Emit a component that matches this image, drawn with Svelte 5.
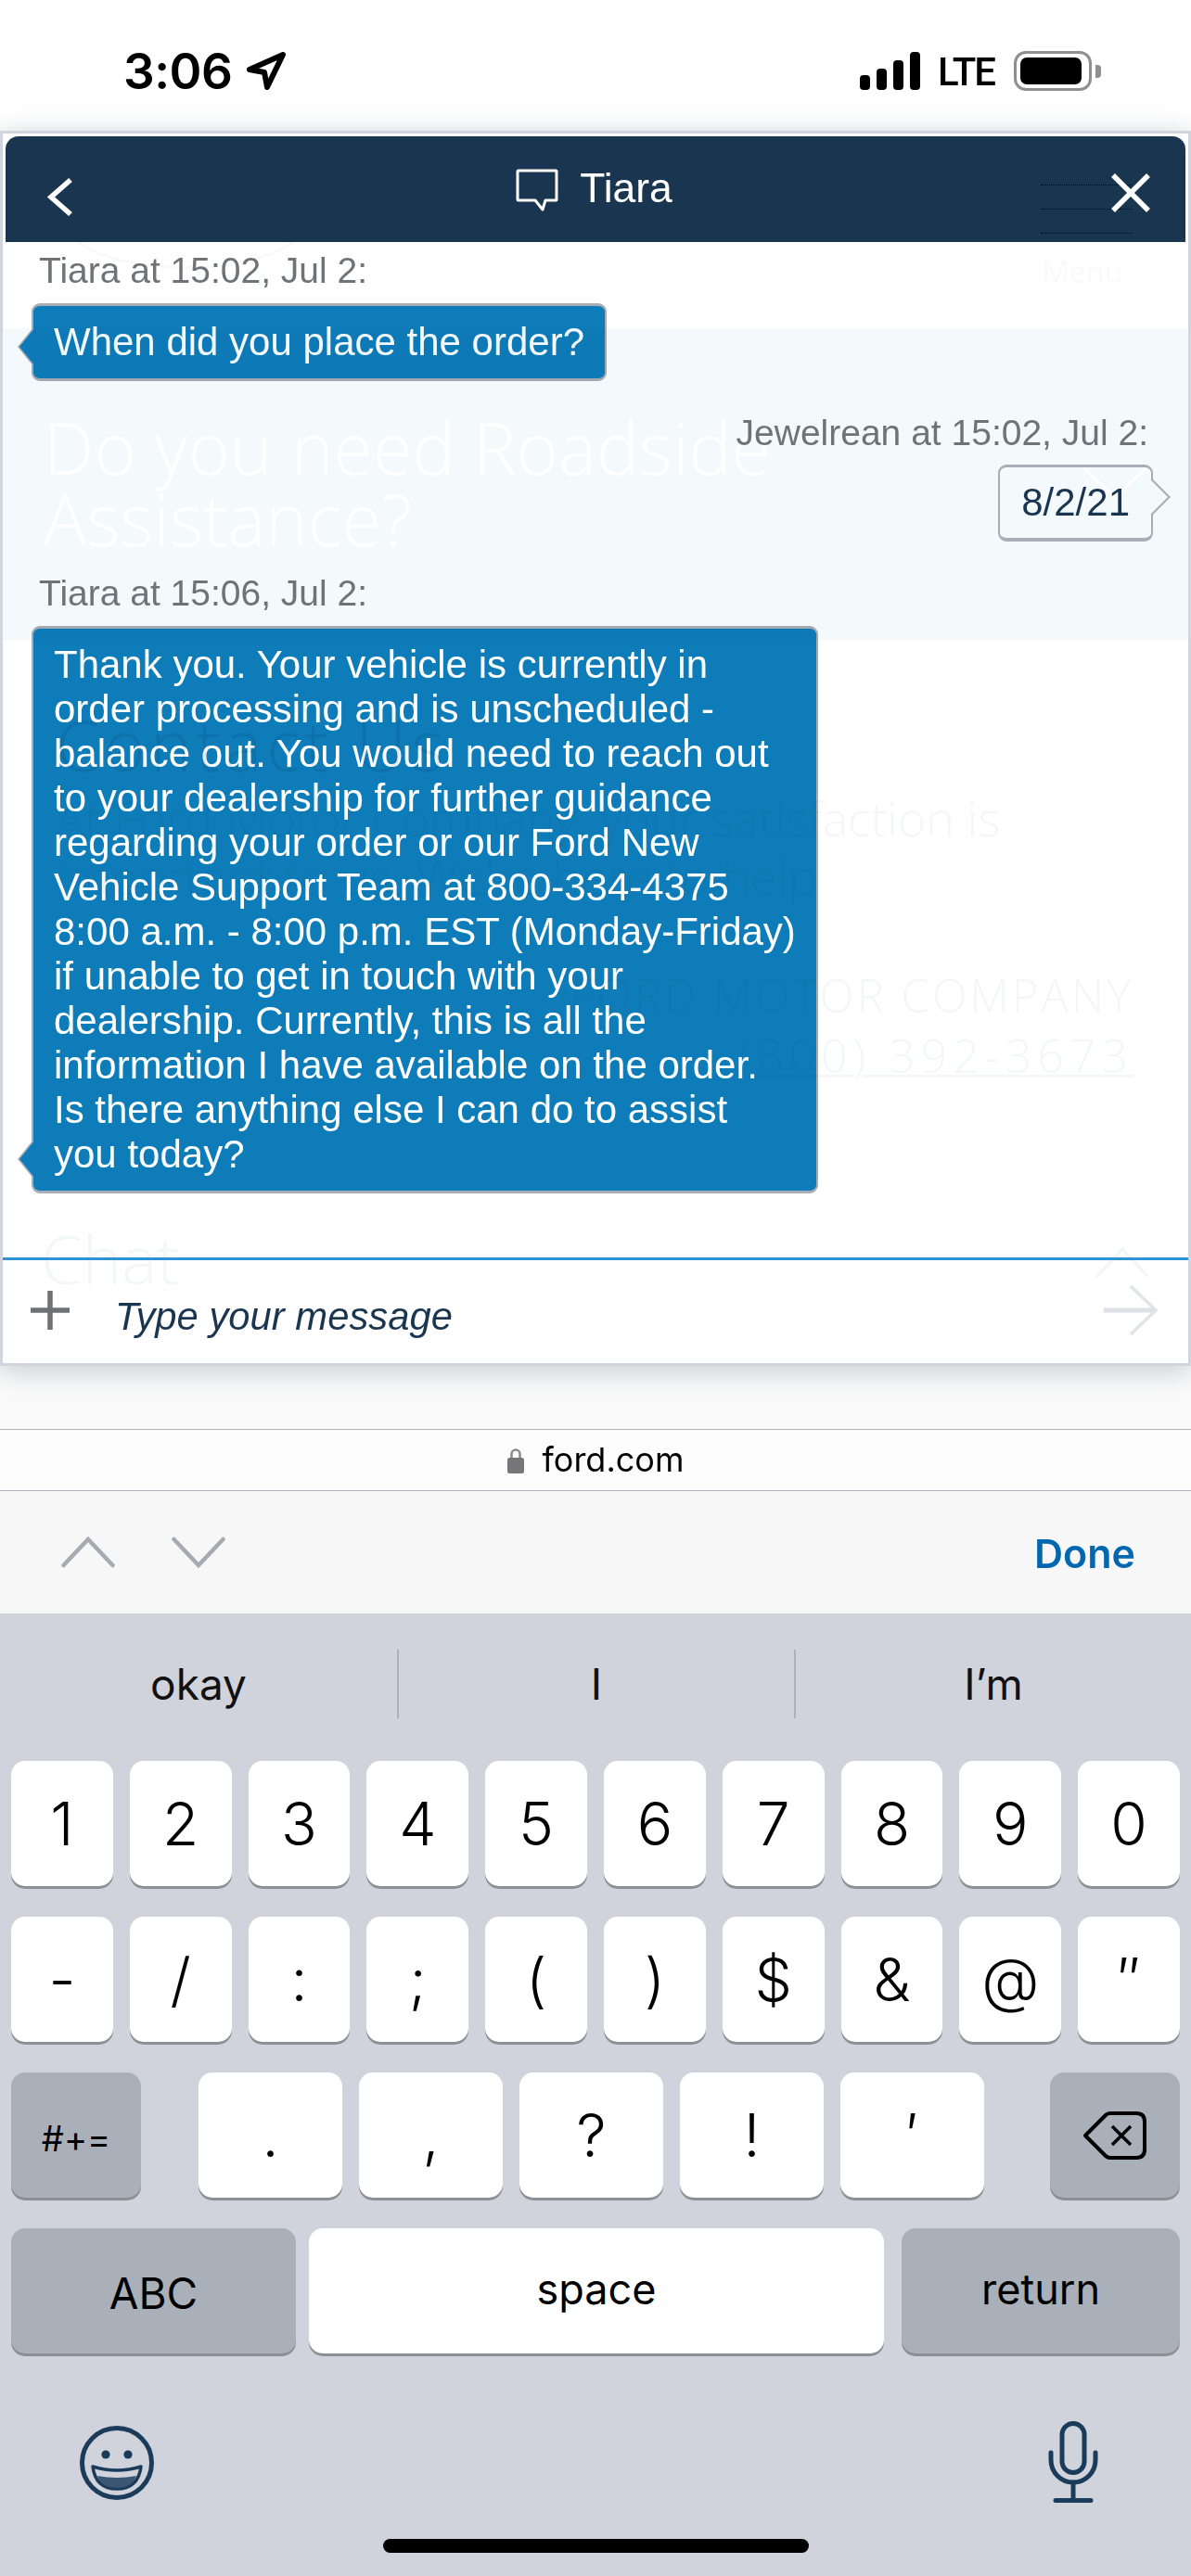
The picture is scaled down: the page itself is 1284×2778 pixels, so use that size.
<script lang="ts">
	// line breaks as they fall in the reply bubble
	const lines = [
		'Thank you. Your vehicle is currently in',
		'order processing and is unscheduled -',
		'balance out. You would need to reach out',
		'to your dealership for further guidance',
		'regarding your order or our Ford New',
		'Vehicle Support Team at 800-334-4375',
		'8:00 a.m. - 8:00 p.m. EST (Monday-Friday)',
		'if unable to get in touch with your',
		'dealership. Currently, this is all the',
		'information I have available on the order.',
		'Is there anything else I can do to assist',
		'you today?'
	];

	const digits = ['1', '2', '3', '4', '5', '6', '7', '8', '9', '0'];
	const symbols = ['-', '/', ':', ';', '(', ')', '$', '&', '@', '″'];
	const punct = ['.', ',', '?', '!', '′'];
</script>

<div class="phone">
	<div class="status">
		<div class="time">
			<span>3:06</span>
			<svg class="loc" width="42" height="41" viewBox="0 0 42 41">
				<path d="M39 3 L3 19 L19 22 L22 38 Z" fill="none" stroke="#000" stroke-width="6" stroke-linejoin="round" />
			</svg>
		</div>
		<div class="indicators">
			<div class="signal">
				<i style="height:16px"></i>
				<i style="height:23px"></i>
				<i style="height:32px"></i>
				<i style="height:41px"></i>
			</div>
			<span class="lte">LTE</span>
			<div class="battery"><b></b></div>
			<div class="nub"></div>
		</div>
	</div>

	<div class="stage">
		<!-- page behind the chat, barely showing through -->
		<div class="ghost">
			<div class="ghost-top">
				<div class="oval"><span>Ford</span></div>
				<span class="ghost-menu">Menu</span>
			</div>
			<div class="band">
				<h1>Do you need Roadside<br />Assistance?</h1>
				<svg class="band-chev" width="74" height="40" viewBox="0 0 74 40">
					<path d="M2 2 L37 34 L72 2" fill="none" stroke="#fff" stroke-width="3" />
				</svg>
			</div>
			<div class="contact">
				<h2>Contact Us</h2>
				<p>At Ford Motor Company, your satisfaction is<br />important to us. We're here to help</p>
				<div class="company">FORD MOTOR COMPANY</div>
				<div class="phone-no">(800) 392-3673</div>
			</div>
			<div class="ghost-chat">
				<span>Chat</span>
				<svg width="60" height="34" viewBox="0 0 60 34">
					<path d="M2 32 L30 2 L58 32" fill="none" stroke="#f0f6fa" stroke-width="3" />
				</svg>
			</div>
		</div>

		<div class="chat">
			<div class="chat-head">
				<svg class="back" width="30" height="43" viewBox="0 0 30 43">
					<path d="M26 3 L5 21.5 L26 40" fill="none" stroke="#fff" stroke-width="5.5" />
				</svg>
				<div class="title">
					<svg width="46" height="46" viewBox="0 0 46 46">
						<path d="M3 2 H43 Q44 2 44 3 V33 Q44 34 43 34 H32 L29 44 L21 34 H3 Q2 34 2 33 V3 Q2 2 3 2 Z" fill="none" stroke="#fff" stroke-width="3" stroke-linejoin="round" />
					</svg>
					<span>Tiara</span>
				</div>
				<svg class="close" width="44" height="44" viewBox="0 0 44 44">
					<path d="M3 3 L41 41 M41 3 L3 41" fill="none" stroke="#fff" stroke-width="5.5" />
				</svg>
				<div class="burger"><i></i><i></i><i></i></div>
			</div>

			<div class="messages">
				<div class="who">Tiara at 15:02, Jul 2:</div>
				<div class="bubble agent">When did you place the order?</div>

				<div class="who right">Jewelrean at 15:02, Jul 2:</div>
				<div class="bubble me">8/2/21</div>

				<div class="who">Tiara at 15:06, Jul 2:</div>
				<div class="bubble agent">
					{#each lines as line}
						<div>{line}</div>
					{/each}
				</div>
			</div>

			<div class="composer">
				<svg class="plus" width="44" height="44" viewBox="0 0 44 44">
					<path d="M22 1 V43 M1 22 H43" stroke="#6c7176" stroke-width="5.5" fill="none" />
				</svg>
				<span class="placeholder">Type your message</span>
				<svg class="send" width="60" height="56" viewBox="0 0 60 56">
					<path d="M1 28 H56" stroke="#dde0e6" stroke-width="5" fill="none" />
					<path d="M30 2 L57 28 L30 54" stroke="#e1e4e8" stroke-width="3.5" fill="none" />
				</svg>
			</div>
		</div>
	</div>

	<div class="url">
		<svg width="18" height="28" viewBox="0 0 18 28">
			<path d="M4.5 12 V7 a4.5 4.5 0 0 1 9 0 V12" fill="none" stroke="#8a8a8e" stroke-width="2.5" />
			<rect x="0" y="11" width="18" height="17" rx="2.5" fill="#77777b" />
		</svg>
		<span>ford.com</span>
	</div>

	<div class="toolbar">
		<div class="arrows">
			<svg width="58" height="34" viewBox="0 0 58 34">
				<path d="M2.5 31 L29 3 L55.5 31" fill="none" stroke="#a5aab3" stroke-width="4.5" stroke-linecap="round" />
			</svg>
			<svg width="58" height="34" viewBox="0 0 58 34">
				<path d="M2.5 3 L29 31 L55.5 3" fill="none" stroke="#a5aab3" stroke-width="4.5" stroke-linecap="round" />
			</svg>
		</div>
		<span class="done">Done</span>
	</div>

	<div class="keyboard">
		<div class="suggest">
			<span>okay</span>
			<span>I</span>
			<span>I’m</span>
		</div>

		<div class="row">
			{#each digits as d}
				<div class="key">{d}</div>
			{/each}
		</div>
		<div class="row">
			{#each symbols as s}
				<div class="key">{s}</div>
			{/each}
		</div>
		<div class="row third">
			<div class="key dark small">#+=</div>
			<div class="punct">
				{#each punct as p}
					<div class="key">{p}</div>
				{/each}
			</div>
			<div class="key dark">
				<svg width="70" height="52" viewBox="0 0 70 52">
					<path d="M3 26 L25 4 Q27 2 30 2 H58 Q67 2 67 11 V41 Q67 50 58 50 H30 Q27 50 25 48 Z" fill="none" stroke="#000" stroke-width="4" stroke-linejoin="round" />
					<path d="M32 16 L52 36 M52 16 L32 36" fill="none" stroke="#000" stroke-width="3.5" />
				</svg>
			</div>
		</div>
		<div class="row fourth">
			<div class="key dark word abc">ABC</div>
			<div class="key word space">space</div>
			<div class="key dark word ret">return</div>
		</div>

		<div class="tools">
			<svg width="84" height="84" viewBox="0 0 84 84">
				<circle cx="42" cy="42" r="37.5" fill="none" stroke="#1b3b5a" stroke-width="5" />
				<circle cx="30" cy="33" r="4.6" fill="#1b3b5a" />
				<circle cx="54" cy="33" r="4.6" fill="#1b3b5a" />
				<path d="M16 46 Q42 54 68 46 Q65 70 42 70 Q19 70 16 46 Z" fill="#d0d3dc" stroke="#1b3b5a" stroke-width="3.5" stroke-linejoin="round" />
				<path d="M21 56 Q42 60 63 56 Q58 69 42 69 Q26 69 21 56 Z" fill="#3b5672" />
			</svg>
			<svg width="56" height="90" viewBox="0 0 56 90">
				<rect x="16" y="2.5" width="24" height="53" rx="12" fill="none" stroke="#1b3b5a" stroke-width="5" />
				<path d="M4 34 V42 a24 24 0 0 0 48 0 V34" fill="none" stroke="#1b3b5a" stroke-width="5" stroke-linecap="round" />
				<path d="M28 66 V84 M9 85.5 H47" fill="none" stroke="#1b3b5a" stroke-width="5" stroke-linecap="round" />
			</svg>
		</div>

		<div class="home"></div>
	</div>
</div>

<style>
	:global(body) {
		margin: 0;
		background: #fff;
	}

	.phone {
		width: 1284px;
		height: 2778px;
		display: flex;
		flex-direction: column;
		overflow: hidden;
		font-family: 'Liberation Sans', Arial, sans-serif;
		color: #000;
	}

	.status {
		height: 141px;
		box-sizing: border-box;
		padding: 12px 97px 0 133px;
		display: flex;
		align-items: center;
		justify-content: space-between;
		font-family: Inter, sans-serif;
	}

	.time {
		display: flex;
		align-items: center;
		gap: 16px;
		font-size: 53px;
		font-weight: 600;
		letter-spacing: -0.5px;
	}

	.indicators {
		display: flex;
		align-items: center;
	}

	.signal {
		display: flex;
		align-items: flex-end;
		gap: 7px;
		height: 41px;
	}

	.signal i {
		width: 11px;
		background: #000;
		border-radius: 4px;
	}

	.lte {
		font-family: Roboto, sans-serif;
		font-size: 42px;
		font-weight: 500;
		letter-spacing: -2px;
		margin: 3px 21px 0 19px;
		line-height: 1;
	}

	.battery {
		width: 84px;
		height: 43px;
		box-sizing: border-box;
		border: 3px solid #8f8f93;
		border-radius: 13px;
		padding: 4px;
		display: flex;
	}

	.battery b {
		flex: 1;
		background: #000;
		border-radius: 7px;
		margin-right: 4px;
	}

	.nub {
		width: 6px;
		height: 14px;
		margin-left: 4px;
		background: #8f8f93;
		border-radius: 0 4px 4px 0;
	}

	.stage {
		position: relative;
		height: 1400px;
		background: #fafafa;
	}

	.ghost {
		position: absolute;
		top: 0;
		left: 0;
		right: 0;
		height: 1332px;
		background: #fff;
		overflow: hidden;
		font-family: 'Open Sans', sans-serif;
		font-weight: 300;
		color: #f6f7f8;
	}

	.ghost-top {
		height: 213px;
		box-sizing: border-box;
		padding: 49px 74px 0 70px;
		display: flex;
		justify-content: space-between;
	}

	.oval {
		width: 260px;
		height: 100px;
		box-sizing: border-box;
		border: 3px solid #f9f9f9;
		border-radius: 50%;
		text-align: center;
		font-family: 'Liberation Serif', serif;
		font-style: italic;
		font-size: 74px;
		line-height: 80px;
		color: #f9f9f9;
	}

	.ghost-menu {
		font-size: 32px;
		font-weight: 400;
		color: #fafafa;
		margin-top: 81px;
		line-height: 44px;
		height: 44px;
	}

	.band {
		position: relative;
		height: 336px;
		box-sizing: border-box;
		padding: 90px 0 0 47px;
		background: #f4f9fc;
	}

	.band h1 {
		margin: 0;
		font-size: 77px;
		font-weight: 300;
		line-height: 77px;
		letter-spacing: 0.2px;
		color: #fff;
	}

	.band-chev {
		position: absolute;
		top: 148px;
		left: 1165px;
	}

	.contact {
		padding: 68px 62px 0 60px;
		color: #f5f6f7;
	}

	.contact h2 {
		margin: 0;
		font-size: 76px;
		font-weight: 300;
		line-height: 90px;
		letter-spacing: 5px;
		color: #e6eaee;
	}

	.contact p {
		margin: 2px 0 0;
		font-size: 52px;
		line-height: 63px;
		white-space: nowrap;
	}

	.company {
		margin-top: 67px;
		text-align: right;
		font-size: 49px;
		line-height: 60px;
		letter-spacing: 3px;
	}

	.phone-no {
		margin-top: 2px;
		text-align: right;
		font-size: 50px;
		line-height: 66px;
		letter-spacing: 6px;
		color: #f2f7fa;
		text-decoration: underline;
		text-decoration-thickness: 3px;
	}

	.ghost-chat {
		position: absolute;
		left: 44px;
		right: 44px;
		top: 1176px;
		display: flex;
		justify-content: space-between;
		align-items: flex-start;
		font-size: 72px;
		line-height: 80px;
		color: #f2f7fa;
	}

	.ghost-chat svg {
		margin-top: 28px;
	}

	.chat {
		position: relative;
		height: 1332px;
		box-sizing: border-box;
		border: 3px solid #d2d5de;
		box-shadow: 0 5px 28px rgba(100, 110, 130, 0.35);
		display: flex;
		flex-direction: column;
	}

	.chat-head {
		position: relative;
		height: 114px;
		margin: 3px 3px 0;
		flex: none;
		border-radius: 14px 14px 0 0;
		background: #1a3550;
		display: flex;
		align-items: center;
		justify-content: space-between;
		padding: 0 37px 0 44px;
		color: #fff;
	}

	.back {
		margin-top: 16px;
		position: relative;
		z-index: 1;
	}

	.title {
		display: flex;
		align-items: center;
		gap: 23px;
		font-size: 44.5px;
		margin-left: 4px;
		margin-top: -2px;
	}

	.title svg {
		margin-top: 4px;
	}

	.close {
		margin-top: 8px;
		position: relative;
		z-index: 1;
	}

	.burger {
		position: absolute;
		top: 52px;
		left: 1116px;
		width: 98px;
		display: flex;
		flex-direction: column;
		gap: 25px;
	}

	.burger i {
		display: block;
		border-top: 1px dotted #000;
	}

	.messages {
		flex: 1;
		min-height: 0;
		padding: 9px 38px 0 31px;
		display: flex;
		flex-direction: column;
		align-items: flex-start;
	}

	.who {
		font-size: 39px;
		line-height: 44px;
		color: #6e7378;
		margin: 0 0 13px 8px;
	}

	.who.right {
		align-self: flex-end;
		margin: 0 5px 12px 0;
	}

	.bubble {
		position: relative;
		box-sizing: border-box;
		font-size: 42px;
		line-height: 48px;
		border-style: solid;
		border-color: #a9adb5;
		border-width: 3px 2px;
		border-radius: 9px;
		margin-bottom: 34px;
	}

	.agent {
		width: fit-content;
		padding: 15px 22px;
		background: #0e7cb9;
		color: #fff;
		mix-blend-mode: multiply;
		white-space: nowrap;
	}

	.agent::before,
	.agent::after {
		content: '';
		position: absolute;
		bottom: 13px;
		width: 17px;
		height: 42px;
		clip-path: polygon(100% 0, 0 50%, 100% 100%);
	}

	.agent::before {
		left: -17px;
		background: #a9adb5;
	}

	.agent::after {
		left: -15px;
		background: #0e7cb9;
	}

	.me {
		align-self: flex-end;
		padding: 14px 23px;
		color: #1a3550;
		border-bottom-width: 4px;
		margin-bottom: 34px;
	}

	.me::before,
	.me::after {
		content: '';
		position: absolute;
		top: 12px;
		width: 20px;
		height: 40px;
		clip-path: polygon(0 0, 100% 50%, 0 100%);
	}

	.me::before {
		right: -21px;
		background: #a9adb5;
	}

	.me::after {
		right: -18px;
		background: #f4f9fc;
	}

	.composer {
		flex: none;
		height: 114px;
		box-sizing: border-box;
		border-top: 3px solid #2e93d6;
		display: flex;
		align-items: center;
		padding: 0 32px 0 29px;
	}

	.plus {
		margin-top: -3px;
	}

	.placeholder {
		flex: 1;
		margin: 10px 0 0 48px;
		font-size: 41.8px;
		font-style: italic;
		color: #1a3550;
	}

	.send {
		margin-top: -3px;
	}

	.url {
		height: 67px;
		flex: none;
		box-sizing: border-box;
		border-top: 1px solid #b3b4bd;
		border-bottom: 1px solid #aeb2bf;
		background: #fdfdfd;
		display: flex;
		align-items: center;
		justify-content: center;
		gap: 20px;
		font-family: Inter, sans-serif;
		font-size: 36px;
	}

	.url span {
		margin-top: -2px;
	}

	.toolbar {
		height: 132px;
		flex: none;
		box-sizing: border-box;
		background: #f7f7f7;
		display: flex;
		align-items: center;
		justify-content: space-between;
		padding: 0 60px 0 66px;
	}

	.arrows {
		display: flex;
		gap: 61px;
	}

	.done {
		font-family: Inter, sans-serif;
		font-weight: 600;
		font-size: 43px;
		color: #0068b0;
		margin-top: 2px;
	}

	.keyboard {
		flex: 1;
		background: #d0d3dc;
		padding: 0 12px;
		display: flex;
		flex-direction: column;
		font-family: Inter, sans-serif;
		position: relative;
	}

	.suggest {
		margin: 39px -12px 46px;
		height: 74px;
		display: grid;
		grid-template-columns: repeat(3, 1fr);
	}

	.suggest span {
		text-align: center;
		font-size: 46px;
		line-height: 74px;
		color: #111;
		border-left: 2px solid #adb0b9;
	}

	.suggest span:first-child {
		border-left: none;
	}

	.row {
		display: flex;
		gap: 18px;
		height: 138px;
		margin-bottom: 30px;
	}

	.key {
		flex: 1;
		display: flex;
		align-items: center;
		justify-content: center;
		box-sizing: border-box;
		height: 135px;
		background: #fff;
		border-radius: 15px;
		box-shadow: 0 3px 0 #8e8f93;
		font-size: 64px;
		font-weight: 350;
		color: #000;
	}

	.key.dark {
		background: #a9b0b9;
	}

	.third > .dark {
		flex: none;
		width: 140px;
	}

	.small {
		font-size: 38px;
		font-weight: 400;
		padding-top: 6px;
	}

	.punct {
		flex: 1;
		display: flex;
		gap: 18px;
		margin: 0 53px 0 44px;
	}

	.fourth {
		gap: 14px;
		margin-bottom: 0;
	}

	.word {
		flex: none;
		font-size: 45px;
		font-weight: 400;
		padding-bottom: 5px;
	}

	.abc {
		width: 307px;
		font-size: 46px;
		padding: 4px 0 0;
	}

	.space {
		width: 620px;
		margin-right: 5px;
	}

	.ret {
		width: 300px;
	}

	.tools {
		display: flex;
		justify-content: space-between;
		align-items: center;
		padding: 0 87px 0 72px;
		margin-top: 70px;
	}

	.home {
		position: absolute;
		left: 413px;
		top: 998px;
		width: 459px;
		height: 15px;
		border-radius: 8px;
		background: #000;
	}
</style>
